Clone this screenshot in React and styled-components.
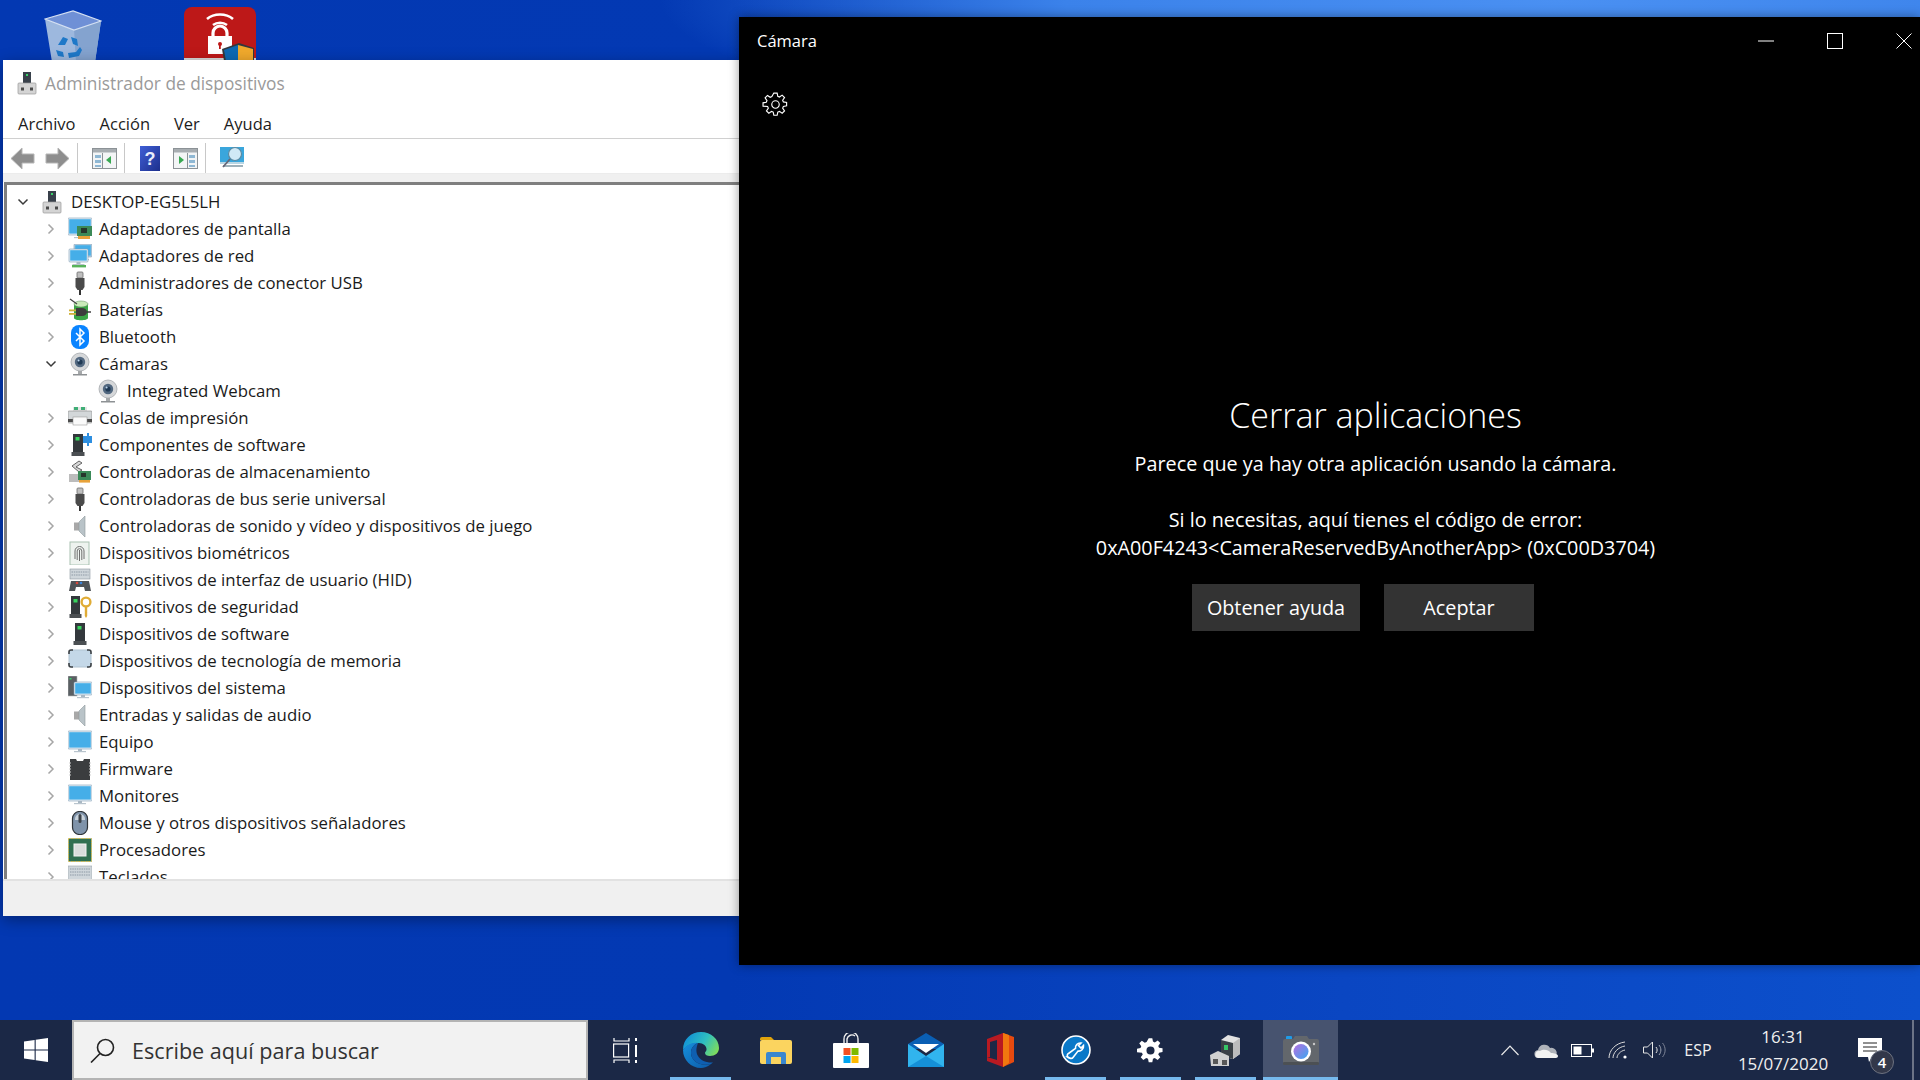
import React from 'react';
import styled, { createGlobalStyle } from 'styled-components';

const GlobalStyle = createGlobalStyle`
  html, body { margin: 0; padding: 0; background: #0339b3; }
  * { box-sizing: border-box; }
  body { font-family: "Open Sans", "Noto Sans", "Liberation Sans", sans-serif; overflow: hidden; }
`;

const Desktop = styled.div`
  position: relative;
  width: 1920px;
  height: 1080px;
  overflow: hidden;
  display: flex;
  flex-direction: column;
  justify-content: flex-end;
  background:
    radial-gradient(ellipse 900px 150px at 1560px 0px, #4a90f2 0%, #3b82ea 55%, rgba(59,130,234,0) 100%),
    linear-gradient(90deg, #0338b2 0%, #0339b3 38%, #0a46c2 70%, #0c50cc 100%);
`;

const DesktopIcon = styled.div`
  position: absolute;
  left: ${(p) => p.$x}px;
  top: ${(p) => p.$y}px;
`;

/* ---------- Device manager ---------- */

const DeviceWindow = styled.div`
  position: absolute;
  left: 3px;
  top: 60px;
  width: 737px;
  height: 856px;
  background: #fff;
  display: flex;
  flex-direction: column;
  box-shadow: 0 4px 14px rgba(0, 0, 0, 0.35);
`;

const TitleBar = styled.div`
  height: 48px;
  display: flex;
  align-items: center;
  padding: 0 0 2px 12px;
  gap: 6px;
  font-size: 17.3px;
  color: #9a9a9a;
`;

const MenuBar = styled.div`
  height: 31px;
  display: flex;
  align-items: center;
  padding-left: 15px;
  gap: 24px;
  font-size: 16.5px;
  color: #1c1c1c;
  border-bottom: 1px solid #d0d0d0;
`;

const Toolbar = styled.div`
  height: 35px;
  display: flex;
  align-items: center;
  padding: 4px 0 0 7px;
  background: #fff;
  border-bottom: 1px solid #ececec;
`;

const ToolIcon = styled.span`
  display: flex;
  align-items: center;
  margin-left: ${(p) => p.$ml || 0}px;
`;

const ToolSep = styled.span`
  width: 1px;
  height: 30px;
  margin-left: ${(p) => p.$ml || 0}px;
  background: #c8c8c8;
`;

const ToolStrip = styled.div`
  height: 8px;
  background: #f0f0f0;
`;

const TreePanel = styled.div`
  flex: 1;
  min-height: 0;
  overflow: hidden;
  border-top: 3px solid #7f7f7f;
  border-left: 3px solid #7f7f7f;
  margin-left: 1px;
  padding-top: 3px;
  background: #fff;
`;

const Row = styled.div`
  height: 27px;
  display: flex;
  align-items: center;
  padding-left: ${(p) => p.$level * 28 + 8}px;
  font-size: 16.8px;
  color: #1a1a1a;
  white-space: nowrap;
`;

const ChevronBox = styled.span`
  width: 16px;
  height: 16px;
  display: flex;
  align-items: center;
  justify-content: center;
`;

const RowIcon = styled.span`
  width: 24px;
  height: 27px;
  margin-left: 9px;
  margin-right: 7px;
  display: flex;
  align-items: center;
  justify-content: center;
`;

const StatusBar = styled.div`
  height: 37px;
  flex: none;
  background: #f0f0f0;
  border-top: 2px solid #e2e2e2;
`;

/* ---------- Camera ---------- */

const CameraWindow = styled.div`
  position: absolute;
  left: 739px;
  top: 17px;
  width: 1181px;
  height: 948px;
  background: #000;
  color: #fff;
  display: flex;
  flex-direction: column;
  box-shadow: 0 0 10px rgba(0, 0, 0, 0.4);
`;

const CameraBar = styled.div`
  height: 47px;
  flex: none;
  display: flex;
  align-items: center;
  padding: 0 8px 0 18px;
  font-size: 16.5px;
`;

const CameraTitle = styled.span`
  flex: 1;
`;

const WindowButtons = styled.div`
  display: flex;
  align-items: center;
  gap: 53px;
`;

const GearButton = styled.div`
  height: 40px;
  padding: 27px 0 0 23px;
  display: flex;
  flex: none;
`;

const Message = styled.div`
  padding: 288px 0 0 92px;
  display: flex;
  flex-direction: column;
  align-items: center;
  text-align: center;
`;

const Heading = styled.h1`
  margin: 0;
  font-size: 34px;
  line-height: 46px;
  font-weight: 300;
`;

const Paragraph = styled.p`
  margin: ${(p) => p.$mt || 0}px 0 0;
  font-size: 19.8px;
  line-height: 28px;
`;

const Buttons = styled.div`
  display: flex;
  gap: 24px;
  margin: 22px 25px 0 0;
`;

const ActionButton = styled.button`
  height: 47px;
  width: ${(p) => p.$w}px;
  background: #333;
  color: #fff;
  border: none;
  padding: 0;
  font-family: inherit;
  font-size: 19.8px;
`;

/* ---------- Taskbar ---------- */

const Taskbar = styled.div`
  height: 60px;
  flex: none;
  background: #1b2846;
  display: flex;
  position: relative;
  z-index: 3;
`;

const StartCell = styled.div`
  width: 72px;
  display: flex;
  align-items: center;
  justify-content: center;
`;

const SearchBox = styled.div`
  width: 516px;
  border: 2px solid #b4b4b4;
  background: #f2f2f2;
  display: flex;
  align-items: center;
  padding-left: 16px;
  gap: 17px;
  font-size: 21.6px;
  color: #333;
`;

const TaskCell = styled.div`
  position: relative;
  width: 75px;
  display: flex;
  align-items: center;
  justify-content: center;
  background: ${(p) => (p.$focused ? '#47536f' : 'transparent')};

  &::after {
    content: '';
    display: ${(p) => (p.$running || p.$focused ? 'block' : 'none')};
    position: absolute;
    bottom: 0;
    left: ${(p) => (p.$focused ? 0 : 7)}px;
    right: ${(p) => (p.$focused ? 0 : 7)}px;
    height: 3px;
    background: #76b9ed;
  }
`;

const Tray = styled.div`
  margin-left: auto;
  display: flex;
  align-items: stretch;
  color: #f0f0f0;
`;

const TrayCell = styled.div`
  width: ${(p) => p.$w}px;
  display: flex;
  align-items: center;
  justify-content: center;
  font-size: ${(p) => p.$fs || 16}px;
`;

const Clock = styled.div`
  width: 118px;
  display: flex;
  flex-direction: column;
  align-items: center;
  justify-content: center;
  font-size: 17px;
  line-height: 27px;
`;

const Notify = styled.div`
  position: relative;
  width: 56px;
  display: flex;
  align-items: center;
  justify-content: center;
`;

const NotifyBadge = styled.span`
  position: absolute;
  left: 28px;
  top: 30px;
  width: 24px;
  height: 24px;
  border-radius: 50%;
  background: #33384a;
  border: 1px solid #6d7280;
  color: #fff;
  font-size: 15px;
  font-weight: 600;
  display: flex;
  align-items: center;
  justify-content: center;
`;

const ShowDesktop = styled.span`
  width: 2px;
  margin: 0 6px 0 14px;
  background: #6c7486;
`;

/* ---------- Tree icons ---------- */

const Mon = ({ x = 0, y = 0, w = 24, h = 16, dark }) => (
  <g>
    <rect x={x} y={y} width={w} height={h} rx="1" fill={dark ? '#b9cfe0' : '#e6eef5'} stroke="#7f9db5" strokeWidth=".6" />
    <rect x={x + 1.2} y={y + 1.2} width={w - 2.4} height={h - 2.6} fill="#45aee8" />
    <rect x={x + w / 2 - 2} y={y + h} width="4" height="2" fill="#a9b8c4" />
    <rect x={x + w / 2 - 6} y={y + h + 2} width="12" height="1.2" fill="#b8c4cd" />
  </g>
);

const Plug = () => (
  <>
    <rect x="9" y="1" width="6" height="6" rx="1" fill="#bfbfbf" stroke="#6d6d6d" strokeWidth=".8" />
    <path d="M7.5 7h9v9l-2 3h-5l-2-3z" fill="#4a4a4a" />
    <rect x="11" y="19" width="2" height="5" fill="#333" />
  </>
);

const Speaker = () => (
  <>
    <rect x="6" y="8.5" width="5" height="8" fill="#a8a8a8" />
    <path d="M11 8l6-6v21l-6-6z" fill="#b9c3c8" stroke="#8e989c" strokeWidth=".6" />
  </>
);

const Tower = ({ x = 6, w = 10 }) => (
  <>
    <rect x={x} y="1" width={w} height="18" fill="#33383c" />
    <rect x={x + 2.5} y="4" width="4" height="3.5" fill="#37d35c" />
    <rect x={x - 1.5} y="19" width={w + 3} height="4" fill="#4b4f52" />
  </>
);

const Webcam = () => (
  <>
    <circle cx="12" cy="10" r="9" fill="#d5d7d9" stroke="#a6aaad" strokeWidth=".8" />
    <circle cx="12" cy="10" r="5.2" fill="#51677f" />
    <circle cx="12" cy="10" r="2.6" fill="#1f3954" />
    <circle cx="10.6" cy="8.4" r="1" fill="#bcd6ee" />
    <rect x="10" y="19" width="4" height="3" fill="#a5a8aa" />
    <rect x="5" y="22" width="14" height="1.5" fill="#8d9194" />
  </>
);

const Computer = () => (
  <>
    <rect x="8" y="1" width="8" height="12" fill="#38404a" />
    <rect x="11" y="3" width="2" height="2" fill="#3ad36a" />
    <rect x="3" y="12" width="18" height="11" rx="1" fill="#d4d4d4" stroke="#9a9a9a" strokeWidth=".7" />
    <rect x="6" y="16.5" width="3" height="3" fill="#4b4b4b" />
    <rect x="15" y="16.5" width="3" height="3" fill="#4b4b4b" />
  </>
);

const TREE_ICONS = {
  root: <Computer />,
  display: (
    <>
      <Mon y={1} h={17} />
      <rect x="9" y="9" width="15" height="10" fill="#3b8a58" />
      <rect x="13" y="11" width="6" height="5" fill="#26372c" />
      <rect x="10" y="19" width="12" height="3" fill="#e8a23a" />
    </>
  ),
  network: (
    <>
      <Mon x={6} y={0} w={18} h={13} dark />
      <Mon x={1} y={5} w={19} h={13} />
      <rect x="4" y="21" width="14" height="2.4" fill="#58b35a" />
    </>
  ),
  usb: <Plug />,
  battery: (
    <>
      <path d="M6 6h14v14c0 3-14 3-14 0z" fill="#3aa546" />
      <ellipse cx="13" cy="6" rx="7" ry="3" fill="#c9eab9" stroke="#5b8a5b" strokeWidth=".5" />
      <path d="M2 1l7 5" stroke="#444" strokeWidth="1.2" fill="none" />
      <path d="M8 10h6c3 0 5 2 5 4s-2 4-5 4H8z" fill="#3c3c3c" />
      <rect x="1" y="11.500" width="7" height="1.8" fill="#d0b23a" />
      <rect x="1" y="15" width="7" height="1.8" fill="#d0b23a" />
      <path d="M19 14h4" stroke="#333" strokeWidth="1.4" />
    </>
  ),
  bluetooth: (
    <>
      <rect x="3" y="0" width="18" height="24" rx="8" fill="#0a84ff" />
      <path d="M8 8l8 8-4 4V4l4 4-8 8" fill="none" stroke="#fff" strokeWidth="1.5" />
    </>
  ),
  webcam: <Webcam />,
  printer: (
    <>
      <rect x="5" y="1" width="14" height="5" fill="#e5e5e5" />
      <path d="M6 1h4v3H6zM13 1h4v3h-4z" fill="#3fae76" />
      <rect x="0" y="5" width="24" height="12" rx="1" fill="#d3d7d9" stroke="#858585" strokeWidth=".6" />
      <rect x="0" y="13" width="24" height="3" fill="#4c4c4c" />
      <rect x="5" y="11" width="14" height="8" fill="#fafafa" stroke="#8c8c8c" strokeWidth=".5" />
    </>
  ),
  components: (
    <>
      <Tower x={5} w={10} />
      <rect x="15" y="3" width="9" height="7" fill="#2e8fe0" />
      <path d="M19 0h2v13h-2z" fill="#2e8fe0" />
    </>
  ),
  storage: (
    <>
      <path d="M4 6l7-5 3 2-6 4 6 3-3 2z" fill="#d7d7d7" stroke="#555" strokeWidth=".9" />
      <rect x="1" y="14" width="13" height="8" fill="#bcbcbc" />
      <rect x="10" y="11" width="13" height="9" fill="#3b8a58" />
      <rect x="13" y="13" width="5" height="4" fill="#26372c" />
      <rect x="11" y="20" width="11" height="2.6" fill="#e8a23a" />
    </>
  ),
  universal: <Plug />,
  audio: <Speaker />,
  biometric: (
    <>
      <rect x="2" y="1" width="19" height="23" fill="#eef3ef" stroke="#a9c2b2" />
      <path d="M7 18V10a4.5 4.5 0 0 1 9 0v8M9.2 19v-9a2.3 2.3 0 0 1 4.6 0v9M11.5 9v11" fill="none" stroke="#6f6f6f" strokeWidth="1" />
    </>
  ),
  hid: (
    <>
      <rect x="2" y="1" width="20" height="10" fill="#cfd6db" stroke="#8c97a0" strokeWidth=".6" />
      <path d="M3.5 4h17M3.5 7h17" stroke="#8d99a5" strokeDasharray="1.5 .8" />
      <path d="M1 23l2-10h18l2 10h-6l-1-4H8l-1 4z" fill="#4f5357" />
      <circle cx="9" cy="15" r="1.3" fill="#d9483b" />
      <circle cx="13" cy="15" r="1.3" fill="#3a83d9" />
    </>
  ),
  security: (
    <>
      <Tower x={3} w={9} />
      <circle cx="18" cy="7" r="4.4" fill="none" stroke="#e0ac36" strokeWidth="2.4" />
      <path d="M16.8 11h2.4v10l-1.2 2-1.2-2z" fill="#e0ac36" />
    </>
  ),
  software: <Tower x={7} w={10} />,
  memory: (
    <>
      <rect x="1" y="1" width="22" height="17" rx="3" fill="#c4d8e8" stroke="#b0c3d1" />
      <path d="M1 5V3a2 2 0 0 1 2-2h2M19 1h2a2 2 0 0 1 2 2v2M1 14v2a2 2 0 0 0 2 2h2M19 18h2a2 2 0 0 0 2-2v-2" fill="none" stroke="#3c4145" strokeWidth="1.6" />
    </>
  ),
  system: (
    <>
      <rect x="0" y="0" width="9" height="20" fill="#5a5f63" stroke="#b4b8ba" strokeWidth=".6" />
      <rect x="1.5" y="2" width="2" height="1.5" fill="#3ad36a" />
      <Mon x={6} y={6} w={18} h={13} />
    </>
  ),
  computer: <Mon y={1} h={18} />,
  firmware: (
    <>
      <path d="M2 2h6l1 2h6l1-2h6v21H2z" fill="#3b3d3f" />
      <path d="M1 6h2M1 9h2M1 12h2M1 15h2M1 18h2M21 6h2M21 9h2M21 12h2M21 15h2M21 18h2" stroke="#cfcfcf" strokeWidth="1.2" />
    </>
  ),
  monitor: <Mon y={1} h={16} />,
  mouse: (
    <>
      <rect x="4.5" y="0.5" width="15" height="23" rx="7" fill="#7f93aa" stroke="#2e3338" strokeWidth="1.2" />
      <path d="M7 8a5 5 0 0 1 10 0v1H7z" fill="#c9d3dc" />
      <rect x="10.5" y="3" width="3" height="9" rx="1.5" fill="#3c4248" />
    </>
  ),
  cpu: (
    <>
      <rect x="0.5" y="0.5" width="23" height="23" fill="#2f6f51" stroke="#d4b94b" strokeDasharray="1.5 1" />
      <rect x="6" y="6" width="12" height="12" fill="#d8dcdc" stroke="#f2f2f2" />
    </>
  ),
  keyboard: (
    <>
      <rect x="0" y="1" width="24" height="14" fill="#cfd6db" stroke="#9aa3aa" strokeWidth=".6" />
      <path d="M2 4h20M2 7h20M2 10h20" stroke="#8d99a5" strokeDasharray="1.5 .8" />
    </>
  ),
};

const TREE = [
  { level: 0, open: true, icon: 'root', label: 'DESKTOP-EG5L5LH' },
  { level: 1, icon: 'display', label: 'Adaptadores de pantalla' },
  { level: 1, icon: 'network', label: 'Adaptadores de red' },
  { level: 1, icon: 'usb', label: 'Administradores de conector USB' },
  { level: 1, icon: 'battery', label: 'Baterías' },
  { level: 1, icon: 'bluetooth', label: 'Bluetooth' },
  { level: 1, open: true, icon: 'webcam', label: 'Cámaras' },
  { level: 2, leaf: true, icon: 'webcam', label: 'Integrated Webcam' },
  { level: 1, icon: 'printer', label: 'Colas de impresión' },
  { level: 1, icon: 'components', label: 'Componentes de software' },
  { level: 1, icon: 'storage', label: 'Controladoras de almacenamiento' },
  { level: 1, icon: 'universal', label: 'Controladoras de bus serie universal' },
  { level: 1, icon: 'audio', label: 'Controladoras de sonido y vídeo y dispositivos de juego' },
  { level: 1, icon: 'biometric', label: 'Dispositivos biométricos' },
  { level: 1, icon: 'hid', label: 'Dispositivos de interfaz de usuario (HID)' },
  { level: 1, icon: 'security', label: 'Dispositivos de seguridad' },
  { level: 1, icon: 'software', label: 'Dispositivos de software' },
  { level: 1, icon: 'memory', label: 'Dispositivos de tecnología de memoria' },
  { level: 1, icon: 'system', label: 'Dispositivos del sistema' },
  { level: 1, icon: 'audio', label: 'Entradas y salidas de audio' },
  { level: 1, icon: 'computer', label: 'Equipo' },
  { level: 1, icon: 'firmware', label: 'Firmware' },
  { level: 1, icon: 'monitor', label: 'Monitores' },
  { level: 1, icon: 'mouse', label: 'Mouse y otros dispositivos señaladores' },
  { level: 1, icon: 'cpu', label: 'Procesadores' },
  { level: 1, icon: 'keyboard', label: 'Teclados' },
];

const Chevron = ({ open }) => (
  <svg width="12" height="12" viewBox="0 0 12 12">
    {open ? (
      <path d="M1.5 3.5L6 8l4.5-4.5" fill="none" stroke="#3a3a3a" strokeWidth="1.5" />
    ) : (
      <path d="M3.5 1.5L8 6l-4.5 4.5" fill="none" stroke="#a6a6a6" strokeWidth="1.5" />
    )}
  </svg>
);

const TreeRow = ({ item }) => (
  <Row $level={item.level}>
    <ChevronBox>{!item.leaf && <Chevron open={item.open} />}</ChevronBox>
    <RowIcon>
      <svg width="24" height="24" viewBox="0 0 24 24">
        {TREE_ICONS[item.icon]}
      </svg>
    </RowIcon>
    {item.label}
  </Row>
);

/* ---------- Toolbar icons ---------- */

const ArrowIcon = ({ flip }) => (
  <svg width="25" height="23" viewBox="0 0 25 23" style={flip ? { transform: 'scaleX(-1)' } : undefined}>
    <path d="M12 1L1 11.5 12 22v-6h12V7H12z" fill="#8e8e8e" stroke="#b5b5b5" strokeWidth="1" />
  </svg>
);

const PaneIcon = ({ right }) => (
  <svg width="25" height="21" viewBox="0 0 25 21">
    <rect x=".5" y=".5" width="24" height="20" fill="#f3f5f6" stroke="#8c9296" />
    <rect x="1" y="1" width="23" height="3.5" fill="#a7adb1" />
    {right ? (
      <>
        <path d="M6 8l5 4-5 4z" fill="#38a852" />
        <path d="M16 7h6v3h-6zM16 12h6v3h-6zM16 17h6v2h-6z" fill="#8fb8d4" />
        <path d="M14.5 5v15" stroke="#8c9296" />
      </>
    ) : (
      <>
        <path d="M19 8l-5 4 5 4z" fill="#38a852" />
        <path d="M3 7h6v3H3zM3 12h6v3H3zM3 17h6v2H3z" fill="#8fb8d4" />
        <path d="M10.5 5v15" stroke="#8c9296" />
      </>
    )}
  </svg>
);

const HelpIcon = () => (
  <svg width="20" height="25" viewBox="0 0 20 25">
    <defs>
      <linearGradient id="helpBg" x1="0" y1="0" x2="1" y2="1">
        <stop offset="0" stopColor="#3f5fd6" />
        <stop offset="1" stopColor="#1d2f8c" />
      </linearGradient>
    </defs>
    <rect width="20" height="25" fill="url(#helpBg)" />
    <text x="10" y="19" textAnchor="middle" fontSize="18" fontWeight="700" fill="#e8eefc" fontFamily="Liberation Sans">?</text>
  </svg>
);

const ScanIcon = () => (
  <svg width="25" height="24" viewBox="0 0 25 24">
    <rect x="0" y="1" width="24" height="15" fill="#3aa6dc" />
    <rect x="0" y="16" width="24" height="2" fill="#b9d6e4" />
    <rect x="3" y="19" width="20" height="2" fill="#9fb1ba" />
    <circle cx="15" cy="8" r="6.5" fill="#cfe9f6" stroke="#5a8aa3" strokeWidth="1.2" />
    <path d="M10 13l-7 8" stroke="#667" strokeWidth="1.8" />
  </svg>
);

/* ---------- Desktop icons ---------- */

const RecycleBin = () => (
  <svg width="58" height="52" viewBox="0 0 58 52">
    <path d="M1 9l29 10 27-8-6 41H8z" fill="#9db8de" />
    <path d="M30 19l27-8-6 41H32z" fill="#84a3cf" />
    <path d="M1 9L29 1l28 10-27 9z" fill="#6f90d6" stroke="#d4e0f2" strokeWidth="1.2" />
    <path d="M14 35l5-8 5 2-3 6zM27 27l6 2 1 7-5-2zM12 40l7 2 1 5-6-1z" fill="#1e78c8" />
    <path d="M24 43l8-1 4-5 2 3-3 6-10 2z" fill="#1e78c8" />
  </svg>
);

const VpnIcon = () => (
  <svg width="72" height="54" viewBox="0 0 72 54">
    <path d="M8 0h56a8 8 0 0 1 8 8v46H0V8a8 8 0 0 1 8-8z" fill="#bd1818" />
    <rect y="51" width="72" height="3" fill="#d8d8d8" />
    <path d="M23 12c7-6 19-6 26 0M29 18c4-3 10-3 14 0" fill="none" stroke="#fff" strokeWidth="2.6" />
    <rect x="24" y="29" width="24" height="18" fill="#fff" />
    <path d="M29 29v-3a7 7 0 0 1 14 0v3" fill="none" stroke="#fff" strokeWidth="3.2" />
    <circle cx="36" cy="37" r="2" fill="#bd1818" />
    <rect x="35" y="37" width="1.8" height="5" fill="#bd1818" />
    <path d="M38 42l17-6 15 5v13H40z" fill="#33383c" />
    <path d="M40 43l14-5v16H42z" fill="#0e69b3" />
    <path d="M54 38l15 4v12H54z" fill="#f0a92c" />
  </svg>
);

/* ---------- Taskbar icons ---------- */

const StartIcon = () => (
  <svg width="24" height="24" viewBox="0 0 24 24" fill="#fff">
    <path d="M0 3.4l10.6-1.5v9.5H0zM11.7 1.8L24 0v11.4H11.7zM0 12.6h10.6v9.5L0 20.6zM11.7 12.6H24V24l-12.3-1.8z" />
  </svg>
);

const SearchIcon = () => (
  <svg width="25" height="25" viewBox="0 0 25 25">
    <circle cx="15.5" cy="9.5" r="8" fill="none" stroke="#222" strokeWidth="1.6" />
    <path d="M10 15.5L1 24.5" stroke="#222" strokeWidth="1.6" />
  </svg>
);

const TaskViewIcon = () => (
  <svg width="25" height="27" viewBox="0 0 25 27" fill="none" stroke="#fff" strokeWidth="1.2">
    <rect x=".6" y="7" width="15" height="13" />
    <path d="M1 1v3h15V1M1 26v-3h15v3" />
    <path d="M23 1v3M23 8v12M23 23v3" strokeWidth="2" />
  </svg>
);

const EdgeIcon = () => (
  <svg width="36" height="36" viewBox="0 0 36 36">
    <defs>
      <linearGradient id="edgeTop" x1="0" y1=".3" x2="1" y2=".7">
        <stop offset="0" stopColor="#0f8ed8" />
        <stop offset=".55" stopColor="#2fbfc0" />
        <stop offset="1" stopColor="#7fdc5b" />
      </linearGradient>
      <linearGradient id="edgeBot" x1="0" y1="0" x2="1" y2="1">
        <stop offset="0" stopColor="#1690dc" />
        <stop offset="1" stopColor="#0c5aa8" />
      </linearGradient>
    </defs>
    <path d="M0 18C0 7 8 0 18 0c10 0 18 7 18 16 0 5-4 8-9 8-3 0-5-1-5-3 0-1 1-1.500 1.500-3 .5-4-3.500-7-7.500-7C8 11 3 14 0 18z" fill="url(#edgeTop)" />
    <path d="M0 18c3-5 9-8 15-7-5 2-7 6-7 10 0 8 9 14 20 11-3 2.500-7 4-10 4C8 36 0 28 0 18z" fill="url(#edgeBot)" />
    <path d="M8 21c0-4 2-8 7-10-1 3-3 8 0 13 2 4 8 7 15 6.500L28 32C17 35 8 29 8 21z" fill="#0f5fb0" />
  </svg>
);

const FolderIcon = () => (
  <svg width="32" height="27" viewBox="0 0 32 27">
    <path d="M0 2a2 2 0 0 1 2-2h9l3 3h-14z" fill="#e0a30c" />
    <rect y="3" width="32" height="24" rx="2" fill="#fbd45f" />
    <path d="M6 27V17a2 2 0 0 1 2-2h16a2 2 0 0 1 2 2v10h-5v-7H11v7z" fill="#3a87cf" />
  </svg>
);

const StoreIcon = () => (
  <svg width="36" height="35" viewBox="0 0 36 35">
    <path d="M11 11V6a7 7 0 0 1 14 0v5M14 11V6a5 5 0 0 1 8-3" fill="none" stroke="#f0f0f0" strokeWidth="1.400" />
    <rect y="10" width="36" height="25" rx="1" fill="#fff" />
    <rect x="10.500" y="15" width="7" height="7" fill="#f25022" />
    <rect x="18.500" y="15" width="7" height="7" fill="#7fba00" />
    <rect x="10.500" y="23" width="7" height="7" fill="#00a4ef" />
    <rect x="18.500" y="23" width="7" height="7" fill="#ffb900" />
  </svg>
);

const MailIcon = () => (
  <svg width="36" height="34" viewBox="0 0 36 34">
    <path d="M0 11L18 0l18 11v5H0z" fill="#0a5fb4" />
    <path d="M5 11h26l-13 9z" fill="#fff" />
    <path d="M0 11l18 12 18-12v23H0z" fill="#31b4ee" />
    <path d="M0 34l18-11 18 11z" fill="#1590d8" />
  </svg>
);

const OfficeIcon = () => (
  <svg width="27" height="34" viewBox="0 0 27 34">
    <path d="M0 6L16 0v34L0 28V24l10 3V7L3 9v15l-3 0z" fill="#b81a22" />
    <path d="M16 0l11 4v25l-11 5z" fill="#e64a0f" />
    <path d="M16 0l6 2v28l-6 4z" fill="#f2780f" />
  </svg>
);

const WrenchIcon = () => (
  <svg width="30" height="30" viewBox="0 0 30 30">
    <circle cx="15" cy="15" r="14" fill="#0a78c8" stroke="#fff" strokeWidth="1.6" />
    <path d="M7 22c-1.500-1.500-.5-3 .5-3.500l7-5c-.5-3 2-6 5.500-5.500l-2.500 2.500 2.500 2.500 2.500-2.500c.5 3.500-2.500 6-5.500 5.500l-5 6.500c-1 1.500-3.500 1-5.500-.5z" fill="none" stroke="#fff" strokeWidth="1.600" />
  </svg>
);

const GearPath = 'M12 8.400a3.600 3.600 0 1 0 0 7.200 3.600 3.600 0 0 0 0-7.200zM10.400 1h3.200l.6 3.100 1.600.7 2.600-1.800 2.300 2.300-1.800 2.600.7 1.600 3.100.6v3.200l-3.100.6-.7 1.600 1.800 2.600-2.300 2.300-2.600-1.800-1.600.7-.6 3.100h-3.200l-.6-3.100-1.600-.7-2.600 1.800-2.300-2.300 1.800-2.600-.7-1.600L0 13.600v-3.200l3.100-.6.7-1.600L2 5.600l2.300-2.300 2.600 1.800 1.600-.7z';

const SettingsIcon = () => (
  <svg width="27" height="27" viewBox="0 0 24 24">
    <path d={GearPath} fill="#fff" fillRule="evenodd" />
  </svg>
);

const CameraGear = () => (
  <svg width="27" height="27" viewBox="-1 -1 26 26">
    <path d={GearPath} fill="none" stroke="#fff" strokeWidth="1.100" />
  </svg>
);

const DevMgrIcon = () => (
  <svg width="31" height="31" viewBox="0 0 31 31">
    <path d="M11 5l7-5 12 3v16l-7 5-12-3z" fill="#e2e2e2" />
    <path d="M11 5l12 3v16l-12-3z" fill="#3a4046" />
    <rect x="14" y="10" width="4" height="5" fill="#37c766" />
    <path d="M23 8l7-5v16l-7 5z" fill="#bcbcbc" />
    <path d="M0 20l8-4 11 5v10H1z" fill="#d0d0d0" />
    <rect x="3" y="24" width="5" height="5" fill="#585858" />
    <rect x="12" y="25" width="5" height="5" fill="#585858" />
  </svg>
);

const CameraIcon = () => (
  <svg width="36" height="29" viewBox="0 0 36 29">
    <defs>
      <linearGradient id="lens" x1="0" y1="0" x2="1" y2="1">
        <stop offset="0" stopColor="#b76ee0" />
        <stop offset="1" stopColor="#3aa7f0" />
      </linearGradient>
    </defs>
    <rect x="3" y="0" width="6" height="4" rx="1" fill="#1f9be8" />
    <path d="M10 3l2-3h12l2 3h8a2 2 0 0 1 2 2v22a2 2 0 0 1-2 2H2a2 2 0 0 1-2-2V5a2 2 0 0 1 2-2z" fill="#63676c" />
    <rect y="26" width="36" height="3" rx="1" fill="#4c5054" />
    <circle cx="18" cy="15.500" r="10" fill="#fff" />
    <circle cx="18" cy="15.500" r="7.500" fill="url(#lens)" />
    <circle cx="31" cy="8" r="1.200" fill="#c9c9c9" />
  </svg>
);

const CloudIcon = () => (
  <svg width="24" height="16" viewBox="0 0 24 16">
    <path d="M5 16a4 4 0 0 1-1-8 6.500 6.500 0 0 1 12-2 5 5 0 0 1 3 10z" fill="#aeb2b9" />
    <path d="M4 16a3.500 3.500 0 0 1 2-7c3-2 8-2 11 2 3 0 7 1 7 3 0 1-1 2-2 2z" fill="#f2f2f2" />
  </svg>
);

const BatteryIcon = () => (
  <svg width="23" height="13" viewBox="0 0 23 13">
    <rect x=".5" y=".5" width="20" height="12" fill="none" stroke="#fff" />
    <rect x="2.500" y="2.500" width="8" height="8" fill="#fff" />
    <rect x="21" y="4.500" width="2" height="4" fill="#fff" />
  </svg>
);

const WifiIcon = () => (
  <svg width="20" height="18" viewBox="0 0 20 18" fill="none">
    <path d="M1 17C1 9 8 2 17 1" stroke="#d8d8d8" strokeWidth="1" />
    <path d="M5 17C5 12 10 6 17 5" stroke="#d8d8d8" strokeWidth="1" />
    <path d="M9 17c0-3 3-7 8-8" stroke="#d8d8d8" strokeWidth="1" />
    <circle cx="17" cy="16" r="1.600" fill="#fff" />
  </svg>
);

const VolumeIcon = () => (
  <svg width="23" height="18" viewBox="0 0 23 18" fill="none" stroke="#e6e6e6" strokeWidth="1">
    <path d="M.5 6v6h4l5 5V1l-5 5z" />
    <path d="M13 6c1.500 2 1.500 4 0 6" />
    <path d="M16 4c2.500 3 2.500 7 0 10" stroke="#9ea5b4" />
    <path d="M19.500 2c3.500 4 3.500 10 0 14" stroke="#7d8496" />
  </svg>
);

const BubbleIcon = () => (
  <svg width="24" height="24" viewBox="0 0 24 24">
    <path d="M0 0h24v19h-10l-3 5-1-5H0z" fill="#fff" />
    <path d="M5 5h14M5 9h14M5 13h14" stroke="#222" strokeWidth="1" />
  </svg>
);

const CaretIcon = () => (
  <svg width="18" height="11" viewBox="0 0 18 11">
    <path d="M.5 10L9 1l8.500 9" fill="none" stroke="#e8e8e8" strokeWidth="1.200" />
  </svg>
);

const TASK_ICONS = [
  { id: 'edge', icon: <EdgeIcon />, running: true },
  { id: 'folder', icon: <FolderIcon /> },
  { id: 'store', icon: <StoreIcon /> },
  { id: 'mail', icon: <MailIcon /> },
  { id: 'office', icon: <OfficeIcon /> },
  { id: 'wrench', icon: <WrenchIcon />, running: true },
  { id: 'settings', icon: <SettingsIcon />, running: true },
  { id: 'devmgr', icon: <DevMgrIcon />, running: true },
  { id: 'camera', icon: <CameraIcon />, focused: true },
];

const App = () => (
  <Desktop>
    <GlobalStyle />
    <DesktopIcon $x={44} $y={10}>
      <RecycleBin />
    </DesktopIcon>
    <DesktopIcon $x={184} $y={7}>
      <VpnIcon />
    </DesktopIcon>

    <DeviceWindow>
      <TitleBar>
        <svg width="24" height="24" viewBox="0 0 24 24">
          <Computer />
        </svg>
        Administrador de dispositivos
      </TitleBar>
      <MenuBar>
        <span>Archivo</span>
        <span>Acción</span>
        <span>Ver</span>
        <span>Ayuda</span>
      </MenuBar>
      <Toolbar>
        <ToolIcon>
          <ArrowIcon />
        </ToolIcon>
        <ToolIcon $ml={10}>
          <ArrowIcon flip />
        </ToolIcon>
        <ToolSep $ml={7} />
        <ToolIcon $ml={14}>
          <PaneIcon />
        </ToolIcon>
        <ToolSep $ml={7} />
        <ToolIcon $ml={15}>
          <HelpIcon />
        </ToolIcon>
        <ToolIcon $ml={13}>
          <PaneIcon right />
        </ToolIcon>
        <ToolSep $ml={7} />
        <ToolIcon $ml={14}>
          <ScanIcon />
        </ToolIcon>
      </Toolbar>
      <ToolStrip />
      <TreePanel>
        {TREE.map((item) => (
          <TreeRow key={item.label} item={item} />
        ))}
      </TreePanel>
      <StatusBar />
    </DeviceWindow>

    <CameraWindow>
      <CameraBar>
        <CameraTitle>Cámara</CameraTitle>
        <WindowButtons>
          <svg width="16" height="16" viewBox="0 0 16 16">
            <path d="M0 8h16" stroke="#fff" strokeWidth="1" />
          </svg>
          <svg width="16" height="16" viewBox="0 0 16 16">
            <rect x=".5" y=".5" width="15" height="15" fill="none" stroke="#fff" />
          </svg>
          <svg width="16" height="16" viewBox="0 0 16 16">
            <path d="M.5.5l15 15M15.500.5l-15 15" stroke="#fff" strokeWidth="1" />
          </svg>
        </WindowButtons>
      </CameraBar>
      <GearButton>
        <CameraGear />
      </GearButton>
      <Message>
        <Heading>Cerrar aplicaciones</Heading>
        <Paragraph $mt={12}>Parece que ya hay otra aplicación usando la cámara.</Paragraph>
        <Paragraph $mt={28}>Si lo necesitas, aquí tienes el código de error:</Paragraph>
        <Paragraph>0xA00F4243&lt;CameraReservedByAnotherApp&gt; (0xC00D3704)</Paragraph>
        <Buttons>
          <ActionButton $w={168}>Obtener ayuda</ActionButton>
          <ActionButton $w={150}>Aceptar</ActionButton>
        </Buttons>
      </Message>
    </CameraWindow>

    <Taskbar>
      <StartCell>
        <StartIcon />
      </StartCell>
      <SearchBox>
        <SearchIcon />
        Escribe aquí para buscar
      </SearchBox>
      <TaskCell>
        <TaskViewIcon />
      </TaskCell>
      {TASK_ICONS.map((t) => (
        <TaskCell key={t.id} $running={t.running} $focused={t.focused}>
          {t.icon}
        </TaskCell>
      ))}
      <Tray>
        <TrayCell $w={36}>
          <CaretIcon />
        </TrayCell>
        <TrayCell $w={36}>
          <CloudIcon />
        </TrayCell>
        <TrayCell $w={36}>
          <BatteryIcon />
        </TrayCell>
        <TrayCell $w={36}>
          <WifiIcon />
        </TrayCell>
        <TrayCell $w={36}>
          <VolumeIcon />
        </TrayCell>
        <TrayCell $w={52} $fs={16}>
          ESP
        </TrayCell>
        <Clock>
          <span>16:31</span>
          <span>15/07/2020</span>
        </Clock>
        <Notify>
          <BubbleIcon />
          <NotifyBadge>4</NotifyBadge>
        </Notify>
        <ShowDesktop />
      </Tray>
    </Taskbar>
  </Desktop>
);

export default App;
